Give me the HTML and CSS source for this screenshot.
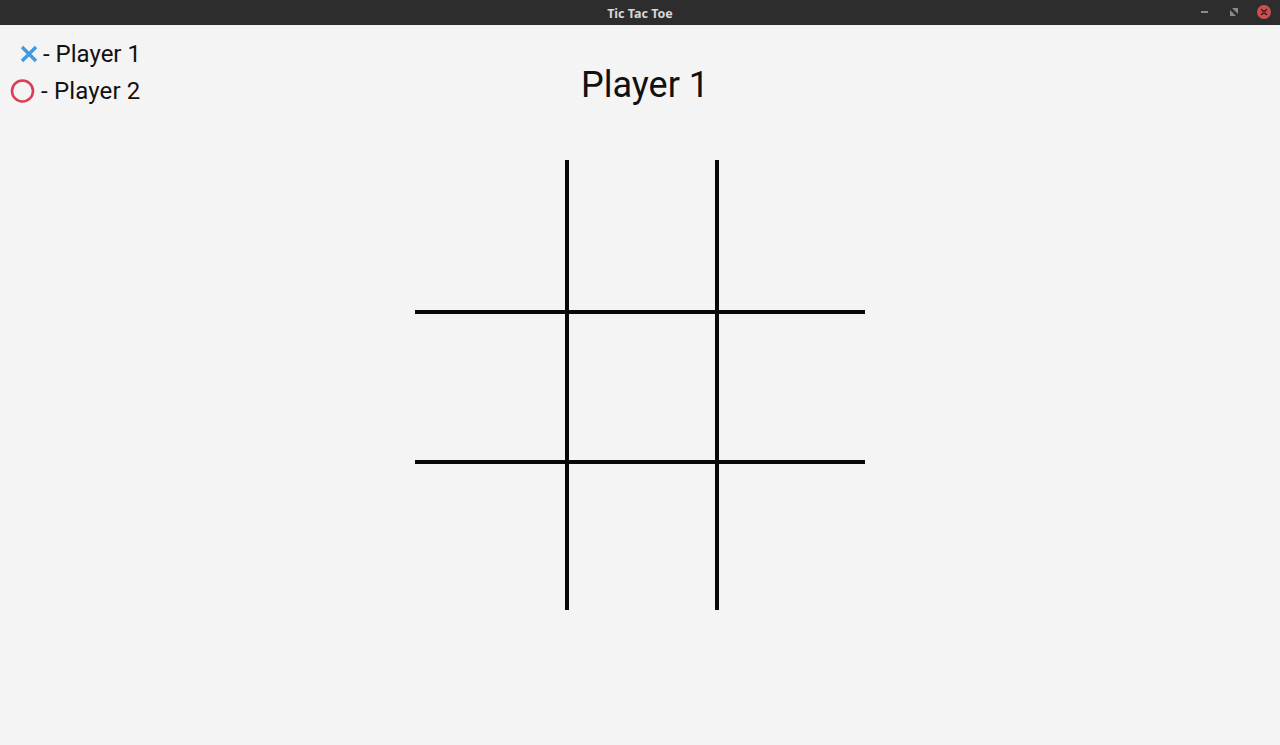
FILE: index.html
```html
<!DOCTYPE html>
<html>
<head>
<meta charset="utf-8">
<link rel="stylesheet" href="styles.css">
</head>
<body>
<div class="window">
  <header class="titlebar">
    <div class="title">Tic Tac Toe</div>
    <div class="controls">
      <span class="ctl min"></span>
      <span class="ctl restore">
        <svg width="10" height="10" viewBox="0 0 10 10"><path d="M3 1h6v6z M1 3v6h6z" fill="#8a8a8a"/></svg>
      </span>
      <span class="ctl close">
        <svg width="14" height="14" viewBox="0 0 14 14"><circle cx="7" cy="7" r="7" fill="#c9504f"/><path d="M4.5 4.5l5 5M9.5 4.5l-5 5" stroke="#3a2222" stroke-width="1.6" stroke-linecap="round"/></svg>
      </span>
    </div>
  </header>
  <main class="content">
    <div class="legend">
      <div class="legend-row p1">
        <svg class="icon-x" width="18" height="18" viewBox="0 0 18 18"><path d="M2 2L16 16M16 2L2 16" stroke="#3f9ae0" stroke-width="3.4"/></svg>
        <span>- Player 1</span>
      </div>
      <div class="legend-row p2">
        <svg class="icon-o" width="26" height="26" viewBox="0 0 26 26"><circle cx="12.5" cy="13" r="10.5" fill="none" stroke="#db3d56" stroke-width="2.6"/></svg>
        <span>- Player 2</span>
      </div>
    </div>
    <h1 class="turn">Player 1</h1>
    <div class="board">
      <div class="vline v1"></div>
      <div class="vline v2"></div>
      <div class="hline h1"></div>
      <div class="hline h2"></div>
    </div>
  </main>
</div>
</body>
</html>
```
FILE: styles.css
```css
html, body {
  margin: 0;
  padding: 0;
  width: 1280px;
  height: 745px;
  overflow: hidden;
  background: #f4f4f4;
}
.window {
  display: flex;
  flex-direction: column;
  height: 745px;
}
.titlebar {
  height: 25px;
  background: #2d2d2d;
  position: relative;
  display: flex;
  align-items: center;
  justify-content: center;
}
.title {
  font-family: "Noto Sans", sans-serif;
  font-weight: 700;
  font-size: 12.5px;
  color: #d8d8d8;
  margin-top: 1px;
}
.controls {
  position: absolute;
  right: 9px;
  top: 5px;
  display: flex;
  align-items: center;
  gap: 16px;
}
.ctl {
  width: 14px;
  height: 14px;
  display: flex;
  align-items: center;
  justify-content: center;
}
.ctl.min::before {
  content: "";
  width: 7px;
  height: 2px;
  background: #8a8a8a;
}
.content {
  position: relative;
  flex: 1;
  font-family: Roboto, "Noto Sans", sans-serif;
  color: #111;
}
.legend {
  position: absolute;
  left: 0;
  top: 0;
}
.legend-row {
  display: flex;
  align-items: center;
  font-size: 24px;
  line-height: 36px;
  height: 36px;
}
.legend-row.p1 {
  padding-left: 20px;
  margin-top: 11px;
}
.legend-row.p1 span { margin-left: 5px; }
.legend-row.p2 {
  padding-left: 10px;
  margin-top: 1px;
}
.legend-row.p2 span { margin-left: 5px; letter-spacing: 0.15px; }
.turn {
  margin: 0;
  padding-top: 36px;
  text-align: center;
  font-weight: 400;
  font-size: 36px;
  line-height: 48px;
  padding-left: 10px;
}
.board {
  position: relative;
  width: 450px;
  height: 450px;
  margin: 51px auto 0 415px;
}
.vline, .hline {
  position: absolute;
  background: #080808;
}
.vline { top: 0; width: 4px; height: 450px; }
.v1 { left: 150px; }
.v2 { left: 300px; }
.hline { left: 0; height: 4px; width: 450px; }
.h1 { top: 150px; }
.h2 { top: 300px; }
```
